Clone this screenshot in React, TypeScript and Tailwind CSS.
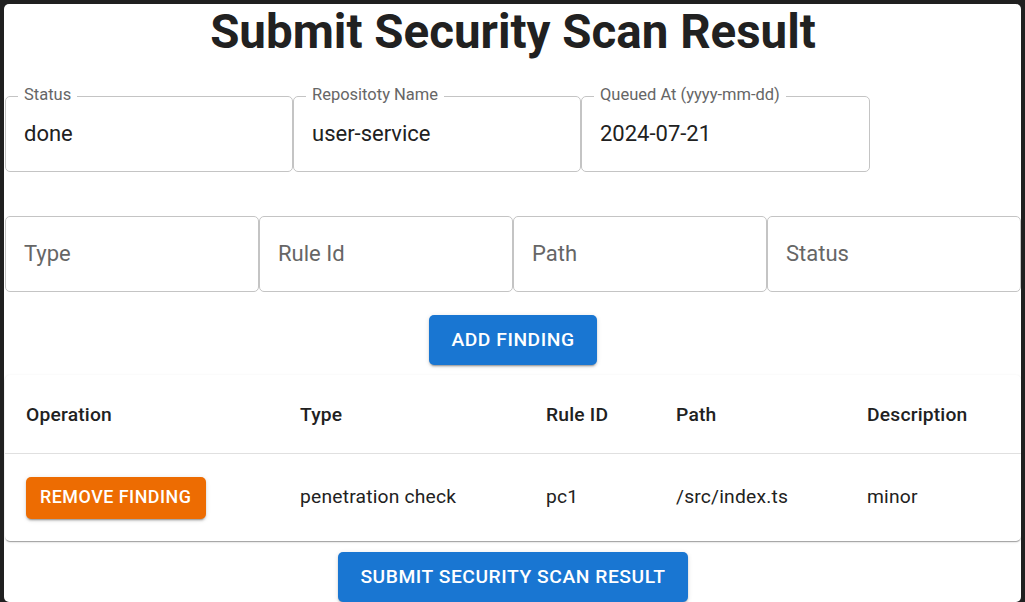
import React from 'react'

type FieldProps = {
  label: string
  value?: string
  className?: string
}

const OutlinedField = ({ label, value, className }: FieldProps) => {
  return (
    <div
      className={`relative h-[76px] rounded-[5px] border border-[#c4c4c4] bg-white ${className ?? ''}`}
    >
      {value ? (
        <>
          <span className="absolute -top-[12px] left-[12px] bg-white px-[6px] text-[16.5px] leading-[20px] text-[#666666]">
            {label}
          </span>
          <div className="flex h-full items-center px-[18px] pb-[2px] text-[22px] text-[#212121]">
            {value}
          </div>
        </>
      ) : (
        <div className="flex h-full items-center px-[18px] pb-[2px] text-[22px] text-[#666666]">
          {label}
        </div>
      )}
    </div>
  )
}

const findings = [
  {
    type: 'penetration check',
    ruleId: 'pc1',
    path: '/src/index.ts',
    description: 'minor'
  }
]

const btnShadow =
  'shadow-[0_3px_1px_-2px_rgba(0,0,0,0.2),0_2px_2px_0_rgba(0,0,0,0.14),0_1px_5px_0_rgba(0,0,0,0.12)]'

const App = () => {
  return (
    <div
      className="h-[602px] w-full bg-[#202020] px-1 pt-1"
      style={{ fontFamily: 'Roboto, "Liberation Sans", sans-serif' }}
    >
      <div className="flex h-full flex-col items-center overflow-hidden rounded-[5px] bg-white pl-px">
        <h1 className="h-[56px] text-[47.5px] font-bold leading-[56px] text-[#212121]">
          Submit Security Scan Result
        </h1>

        <div className="mt-[36px] flex w-full">
          <OutlinedField label="Status" value="done" className="w-[288px]" />
          <OutlinedField
            label="Repositoty Name"
            value="user-service"
            className="w-[288px]"
          />
          <OutlinedField
            label="Queued At (yyyy-mm-dd)"
            value="2024-07-21"
            className="w-[289px]"
          />
        </div>

        <div className="mt-[44px] grid w-full grid-cols-4">
          <OutlinedField label="Type" />
          <OutlinedField label="Rule Id" />
          <OutlinedField label="Path" />
          <OutlinedField label="Status" />
        </div>

        <button
          className={`mt-[23px] h-[50px] rounded-[5px] bg-[#1976d2] px-[22px] text-[19.25px] font-medium tracking-[0.55px] text-white ${btnShadow}`}
        >
          ADD FINDING
        </button>

        <div className="mt-[10px] w-full rounded-[5px] bg-white shadow-[0_2px_1px_-1px_rgba(0,0,0,0.2),0_1px_1px_0_rgba(0,0,0,0.14),0_1px_3px_0_rgba(0,0,0,0.12)]">
          <table className="w-full table-fixed border-collapse text-left text-[19.25px] tracking-[0.2px] text-[#212121]">
            <colgroup>
              <col className="w-[274px]" />
              <col className="w-[246px]" />
              <col className="w-[130px]" />
              <col className="w-[191px]" />
              <col />
            </colgroup>
            <thead>
              <tr className="h-[78px] border-b border-[#e0e0e0]">
                <th className="px-[21px] pt-[3px] font-medium">Operation</th>
                <th className="px-[21px] pt-[3px] font-medium">Type</th>
                <th className="px-[21px] pt-[3px] font-medium">Rule ID</th>
                <th className="px-[21px] pt-[3px] font-medium">Path</th>
                <th className="px-[21px] pt-[3px] font-medium">Description</th>
              </tr>
            </thead>
            <tbody>
              {findings.map((finding, i) => (
                <tr key={i} className="h-[88px]">
                  <td className="px-[21px] pt-px">
                    <button
                      className={`h-[42px] rounded-[5px] bg-[#ed6c02] px-[14px] text-[17.9px] font-medium tracking-[0.5px] text-white ${btnShadow}`}
                    >
                      REMOVE FINDING
                    </button>
                  </td>
                  <td className="px-[21px] pt-px">{finding.type}</td>
                  <td className="px-[21px] pt-px">{finding.ruleId}</td>
                  <td className="px-[21px] pt-px">{finding.path}</td>
                  <td className="px-[21px] pt-px">{finding.description}</td>
                </tr>
              ))}
            </tbody>
          </table>
        </div>

        <button
          className={`mt-[11px] h-[50px] shrink-0 rounded-[5px] bg-[#1976d2] px-[22px] text-[19.25px] font-medium tracking-[0.55px] text-white ${btnShadow}`}
        >
          SUBMIT SECURITY SCAN RESULT
        </button>
      </div>
    </div>
  )
}

export default App
